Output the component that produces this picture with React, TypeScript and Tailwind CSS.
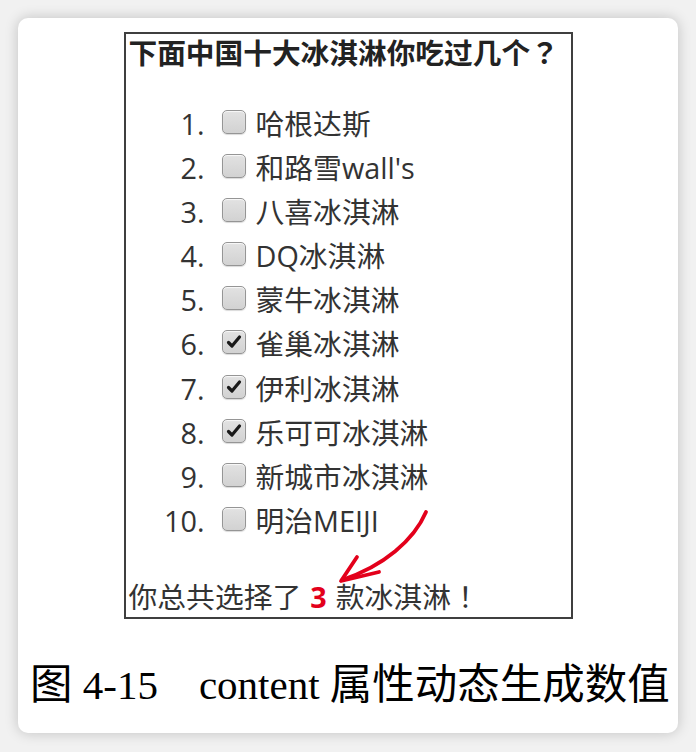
import React from "react";

const items: { label: string; checked: boolean }[] = [
  { label: "哈根达斯", checked: false },
  { label: "和路雪wall's", checked: false },
  { label: "八喜冰淇淋", checked: false },
  { label: "DQ冰淇淋", checked: false },
  { label: "蒙牛冰淇淋", checked: false },
  { label: "雀巢冰淇淋", checked: true },
  { label: "伊利冰淇淋", checked: true },
  { label: "乐可可冰淇淋", checked: true },
  { label: "新城市冰淇淋", checked: false },
  { label: "明治MEIJI", checked: false },
];

const TC = { fontFamily: '"Noto Sans CJK TC", sans-serif' };

function Box({ checked }: { checked: boolean }) {
  return (
    <div className="mt-[8px] ml-[17px] flex h-[24px] w-[24px] shrink-0 items-center justify-center rounded-[5px] border border-[#959595] bg-gradient-to-b from-[#e2e2e2] to-[#d2d2d2] shadow-[inset_0_1px_1px_rgba(255,255,255,0.8),0_1px_1px_rgba(0,0,0,0.15)]">
      {checked && (
        <svg width="18" height="18" viewBox="0 0 18 18">
          <path
            d="M3.5 9.5 L7 13 L14.5 4"
            fill="none"
            stroke="#1a1a1a"
            strokeWidth="3.2"
            strokeLinecap="round"
            strokeLinejoin="round"
          />
        </svg>
      )}
    </div>
  );
}

export default function App() {
  return (
    <div className="flex h-[752px] w-[696px] items-start justify-center bg-[#f1f1f1] pt-[18px]">
      <div className="flex h-[715px] w-[660px] flex-col items-center rounded-[10px] bg-white pt-[14px] shadow-[0_0_14px_rgba(0,0,0,0.2)]">
        <div
          className="relative flex h-[587px] w-[449px] flex-col border-2 border-[#3f3f3f] text-[#333]"
          style={{ fontFamily: '"Open Sans", "Noto Sans CJK SC", sans-serif' }}
        >
          <div
            className="whitespace-nowrap pl-[3px] text-[28.7px] font-bold leading-[36px] text-[#222]"
            style={{ fontFamily: '"Noto Sans CJK SC", sans-serif' }}
          >
            下面中国十大冰淇淋你吃过几个<span style={TC}>？</span>
          </div>
          <div className="mt-[32px] flex flex-col">
            {items.map((it, i) => (
              <div key={i} className="flex h-[44.1px] items-start text-[28.8px] leading-[44px]">
                <span className="w-[79px] shrink-0 text-right">{i + 1}.</span>
                <Box checked={it.checked} />
                <span className="ml-[10px] whitespace-nowrap">{it.label}</span>
              </div>
            ))}
          </div>
          <div className="mt-auto whitespace-nowrap pl-[3px] text-[28.8px] leading-[40px]">
            你总共选择了<span className="inline-block w-[9px]"></span>
            <span className="font-bold text-[#e3001b]">3</span>
            <span className="inline-block w-[9px]"></span>款冰淇淋<span style={TC}>！</span>
          </div>
          <svg
            className="pointer-events-none absolute left-0 top-0"
            width="445"
            height="583"
            viewBox="0 0 445 583"
          >
            <path
              d="M300 478 C 288 506, 258 532, 216 546"
              fill="none"
              stroke="#e3001b"
              strokeWidth="3.8"
              strokeLinecap="round"
            />
            <path
              d="M231 523 L215 547 L253 538"
              fill="none"
              stroke="#e3001b"
              strokeWidth="3.8"
              strokeLinecap="round"
              strokeLinejoin="round"
            />
          </svg>
        </div>
        <div className="mt-[40px] self-start whitespace-pre pl-[12px] leading-[43px] text-black">
          <span className="text-[42.5px]" style={{ fontFamily: '"Noto Sans CJK SC", serif' }}>图</span>
          <span className="text-[41px]" style={{ fontFamily: '"Liberation Serif", serif' }}>{" 4-15    content "}</span>
          <span className="text-[42.5px]" style={{ fontFamily: '"Noto Sans CJK SC", serif' }}>属性动态生成数值</span>
        </div>
      </div>
    </div>
  );
}
